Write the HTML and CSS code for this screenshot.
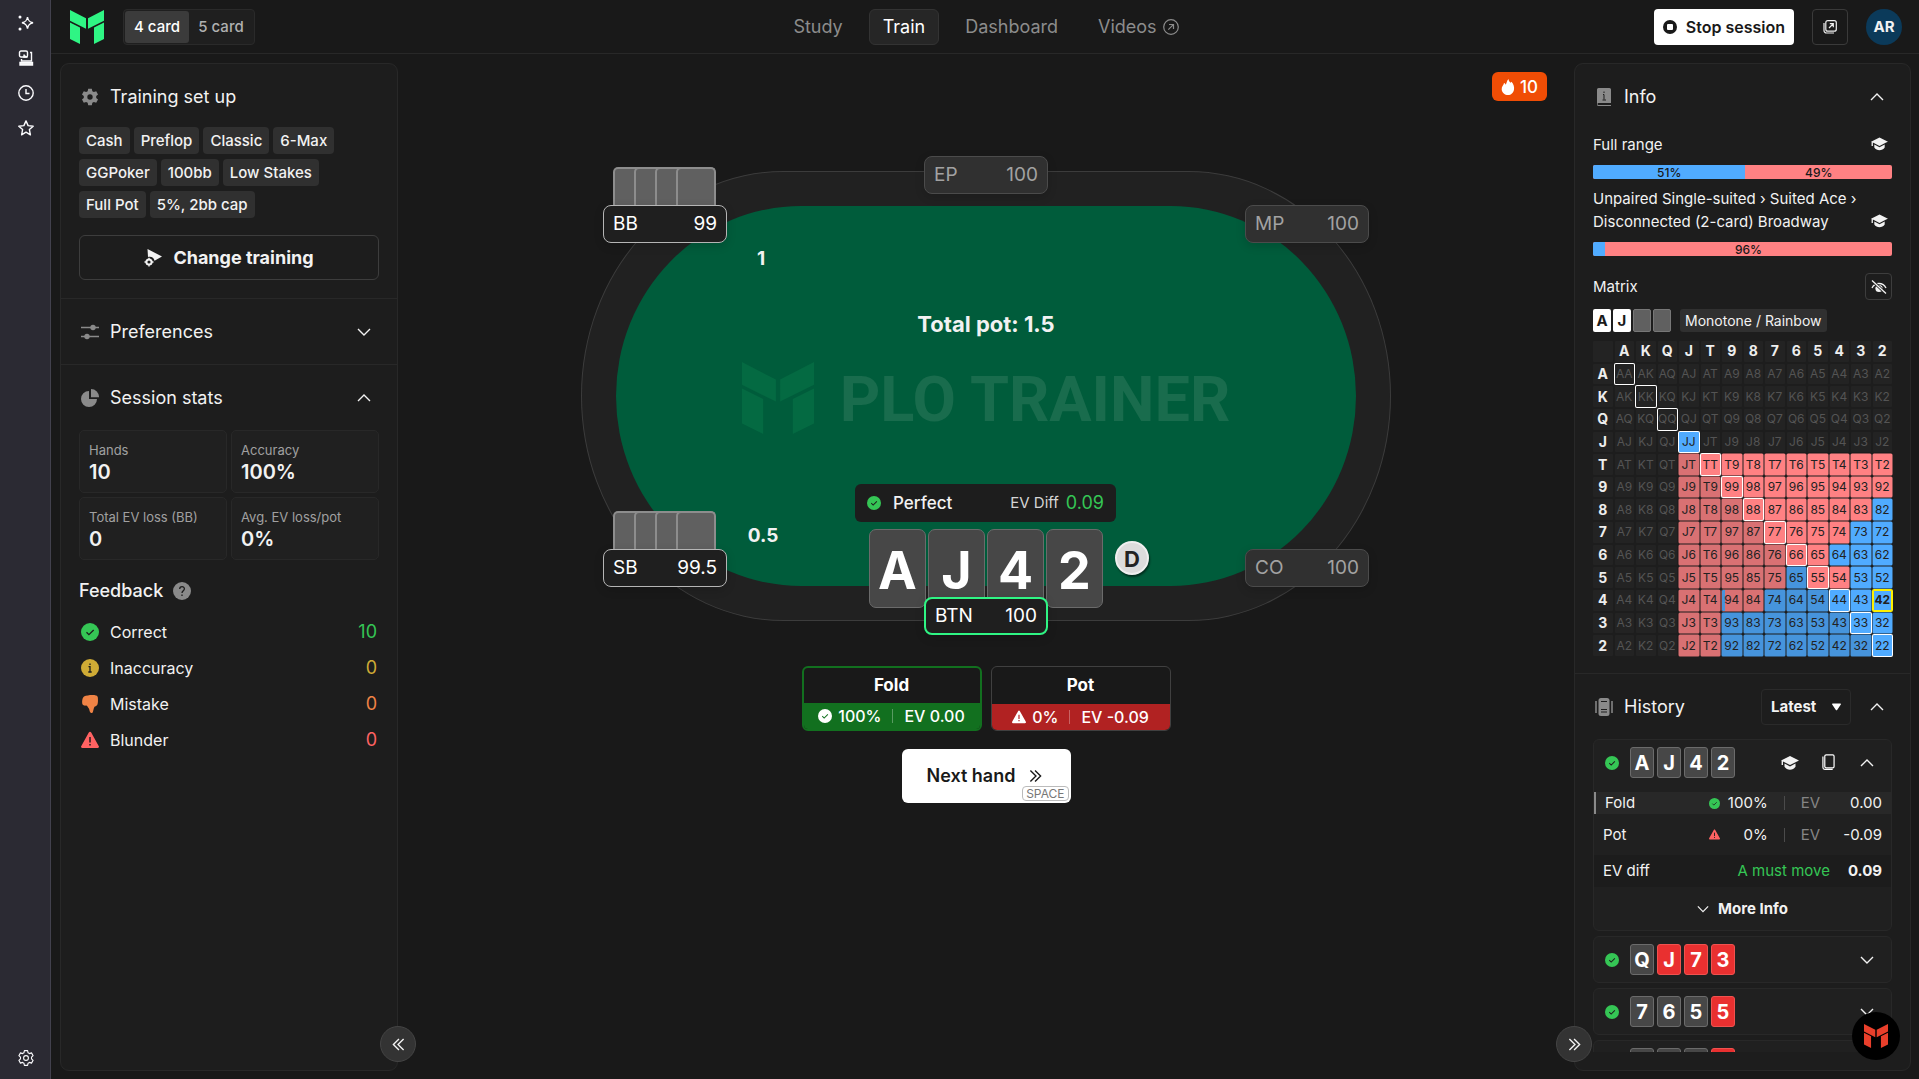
FILE: index.html
```
<!DOCTYPE html>
<html lang="en">
<head>
<meta charset="UTF-8">
<title>PLO Trainer</title>
<link rel="stylesheet" href="styles.css">
<script src="matrix.js" defer></script>
</head>
<body>

<!-- shared icons -->
<svg class="defs" aria-hidden="true">
	<symbol id="logo" viewBox="0 0 34 34"><path d="M0 0l16 8.3v10.4L0 10.7zM34 0L18 8.3v10.4l16-8zM0 12.5l10 5V34L0 29zM34 12.5l-10 5V34l10-5z"/></symbol>
	<symbol id="down" viewBox="0 0 14 14"><path d="M1 4l6 6 6-6" fill="none" stroke="currentColor" stroke-width="1.4"/></symbol>
	<symbol id="up" viewBox="0 0 14 14"><path d="M1 10l6-6 6 6" fill="none" stroke="currentColor" stroke-width="1.4"/></symbol>
	<symbol id="ok" viewBox="0 0 18 18"><circle cx="9" cy="9" r="9" fill="currentColor"/><path d="M5.5 9.2l2.4 2.4 4.8-4.6" fill="none" stroke="var(--mark, #1d1d1d)" stroke-width="1.3"/></symbol>
	<symbol id="warn" viewBox="0 0 18 18"><path d="M9 .8c.5 0 .9.3 1.200.7l7.600 13.700c.5.9-.1 1.800-1.100 1.800H1.300c-1 0-1.600-.9-1.100-1.800L7.800 1.500c.3-.4.7-.7 1.200-.7z" fill="currentColor"/><path d="M9 6v5.500M9 13v1.600" stroke="var(--mark, #1d1d1d)" stroke-width="1.5"/></symbol>
	<symbol id="cap" viewBox="0 0 18 14"><path d="M9 0l9 4.500-2 1L9 9 2 5.500v3.500H.6V4.800L0 4.500z" fill="currentColor"/><path d="M3.500 7.600L9 10.500l5.500-2.900v3.200C12 14.600 6 14.600 3.500 10.800z" fill="currentColor"/></symbol>
	<symbol id="next" viewBox="0 0 14 14"><path d="M1.500 1l6 6-6 6M6.500 1l6 6-6 6" fill="none" stroke="currentColor" stroke-width="1.500"/></symbol>
	<symbol id="prev" viewBox="0 0 14 14"><path d="M12.500 1l-6 6 6 6M7.500 1l-6 6 6 6" fill="none" stroke="currentColor" stroke-width="1.500"/></symbol>
	<symbol id="gear" viewBox="0 0 20 20"><path d="M8 .8h4l.6 2.700 1.700 1 2.600-.9 2 3.500-2 1.900v2l2 1.900-2 3.500-2.600-.9-1.700 1-.6 2.700H8l-.6-2.700-1.700-1-2.600.9-2-3.500 2-1.900V9l-2-1.900 2-3.500 2.600.9 1.700-1z" stroke-linejoin="round"/><circle cx="10" cy="10" r="3" class="hole"/></symbol>
</svg>

<div class="app">
	<aside class="rail">
		<button aria-label="Assistant"><svg viewBox="0 0 16 16"><path d="M9.500 2c.6 3.600 1.700 4.900 5.500 5.800-3.800.9-4.900 2.200-5.500 5.800C8.900 10 7.800 8.700 4 7.800 7.800 6.900 8.900 5.600 9.500 2z"/><circle cx="2" cy="2" r=".8"/><circle cx="2" cy="14" r=".8"/></svg></button>
		<button aria-label="Synced tabs"><svg viewBox="0 0 16 16"><rect x="1.500" y="1" width="8" height="6" rx="1.500"/><path d="M12 2.500h1.500V11h-10V9"/><path d="M2 12.500h12.500V15H2zM6 4.500V7h3.500" fill="currentColor"/></svg></button>
		<button aria-label="History"><svg viewBox="0 0 16 16"><circle cx="8" cy="8" r="7.200"/><path d="M8 4v4.500h3.500"/></svg></button>
		<button aria-label="Bookmarks"><svg viewBox="0 0 16 16"><path d="M8 .9l2.100 4.700 5.100.6-3.800 3.400 1 5.200L8 12.200l-4.400 2.600 1-5.200L.8 6.200l5.100-.6z" stroke-linejoin="round"/></svg></button>
		<button class="settings" aria-label="Settings"><svg><use href="#gear"/></svg></button>
	</aside>

	<div class="page">
		<header class="top">
			<div class="brand">
				<svg class="logo"><use href="#logo"/></svg>
				<div class="tabs"><button class="on">4 card</button><button>5 card</button></div>
			</div>
			<nav class="menu">
				<a href="#">Study</a>
				<a href="#" class="on">Train</a>
				<a href="#">Dashboard</a>
				<a href="#">Videos <svg viewBox="0 0 16 16"><circle cx="8" cy="8" r="7.300"/><path d="M5.300 10.700l5-5M6 5.500h4.500V10"/></svg></a>
			</nav>
			<div class="account">
				<button class="stop"><svg viewBox="0 0 14 14"><circle cx="7" cy="7" r="7" fill="#191919"/><rect x="4" y="4" width="6" height="6" rx="1" fill="#fff"/></svg>Stop session</button>
				<button class="popout" aria-label="Open in window"><svg viewBox="0 0 14 14"><rect x="2.800" y=".7" width="10.500" height="10.500" rx="2"/><path d="M1 3v7.500a2.500 2.500 0 0 0 2.500 2.500H11M6 8l4-4M6.800 3.700h3.500v3.500"/></svg></button>
				<div class="avatar">AR</div>
			</div>
		</header>

		<div class="columns">
			<aside class="panel left">
				<section>
					<h2><svg class="ico" fill="currentColor"><use href="#gear"/></svg>Training set up</h2>
					<ul class="chips">
						<li>Cash</li><li>Preflop</li><li>Classic</li><li>6-Max</li>
						<li>GGPoker</li><li>100bb</li><li>Low Stakes</li>
						<li>Full Pot</li><li>5%, 2bb cap</li>
					</ul>
					<button class="change"><svg viewBox="0 0 18 18" fill="currentColor"><path d="M3.500 0L18 7.500l-7.500 4.300C10 8.500 7 7 4 8z"/><circle cx="5" cy="13" r="2.600" fill="none" stroke="currentColor" stroke-width="2"/><path d="M4.300 8.700h1.400v2H4.300zM4.300 15.500h1.400v2H4.300zM.5 12.300h2v1.400h-2zM7.500 12.300h2v1.400h-2z"/></svg>Change training</button>
				</section>
				<section>
					<h2><svg class="ico" viewBox="0 0 18 18"><path d="M0 4.500h18M0 13.500h18" stroke="currentColor" stroke-width="1.300"/><circle cx="12" cy="4.500" r="2.700" fill="currentColor"/><circle cx="6" cy="13.500" r="2.700" fill="currentColor"/></svg>Preferences<button class="fold-btn" aria-label="Show preferences"><svg><use href="#down"/></svg></button></h2>
				</section>
				<section>
					<h2><svg class="ico" viewBox="0 0 18 18" fill="currentColor"><path d="M8 2v8h8a8 8 0 1 1-8-8z"/><path d="M10 0a8 8 0 0 1 8 8.300h-8z"/></svg>Session stats<button class="fold-btn" aria-label="Hide session stats"><svg><use href="#up"/></svg></button></h2>
					<dl class="stats">
						<div><dt>Hands</dt><dd>10</dd></div>
						<div><dt>Accuracy</dt><dd>100%</dd></div>
						<div><dt>Total EV loss (BB)</dt><dd>0</dd></div>
						<div><dt>Avg. EV loss/pot</dt><dd>0%</dd></div>
					</dl>
					<h3>Feedback <svg viewBox="0 0 18 18"><circle cx="9" cy="9" r="9" fill="#8a8a8a"/><path d="M6.700 7c0-3 4.700-3 4.700-.2C11.400 8.700 9 8.800 9 11M9 12.500V14" fill="none" stroke="#1d1d1d" stroke-width="1.300"/></svg></h3>
					<ul class="feedback">
						<li class="green"><svg><use href="#ok"/></svg><span>Correct</span><b>10</b></li>
						<li class="yellow"><svg viewBox="0 0 18 18"><circle cx="9" cy="9" r="9" fill="currentColor"/><path d="M9 4.500V6M7.500 7.700H9v5M7.300 13h3.400" fill="none" stroke="#1d1d1d" stroke-width="1.300"/></svg><span>Inaccuracy</span><b>0</b></li>
						<li class="orange"><svg viewBox="0 0 18 18" fill="currentColor"><path d="M3 1.500C6 .3 11-.3 15 .4c1.500.2 2 1.600 1.900 3.200.2 2.800 0 5.400-.9 6.700-.8.9-1.900 1-2.500 1.500-.9 1.500-1.100 3.800-1.600 5.200-.5 1.500-2.600 1.300-3-.2-.4-1.700-.7-3-1.600-4.100-.6-1.100-1.200-2-2.100-2.200C3.800 10.800 2.400 10.600 1.600 9.500.7 8 1 3 3 1.500z"/></svg><span>Mistake</span><b>0</b></li>
						<li class="red"><svg><use href="#warn"/></svg><span>Blunder</span><b>0</b></li>
					</ul>
				</section>
				<button class="collapse" aria-label="Collapse left panel"><svg><use href="#prev"/></svg></button>
			</aside>

			<main class="stage">
				<div class="streak"><svg viewBox="0 0 14 16"><path d="M7.500 0c.2 2 1 2.800 2.100 3.700l.9-1C12.500 5 13.500 7.500 13 10.500 12.500 14 10 16 7 16s-6-2-6.300-5.500C.5 7.500 2.500 6.500 3 4c1 .3 1.500 1 1.700 1.700C5.700 4.500 5.500 2 7.500 0z" fill="#fff"/></svg>10</div>
				<div class="table">
					<div class="felt"></div>
					<div class="pot">Total pot: 1.5</div>
					<div class="watermark"><svg><use href="#logo"/></svg><span>PLO TRAINER</span></div>

					<div class="backs bb"><i></i><i></i><i></i><i></i></div>
					<div class="seat live bb"><span>BB</span><span>99</span></div>
					<div class="bet bb">1</div>
					<div class="backs sb"><i></i><i></i><i></i><i></i></div>
					<div class="seat live sb"><span>SB</span><span>99.5</span></div>
					<div class="bet sb">0.5</div>
					<div class="seat ep"><span>EP</span><span>100</span></div>
					<div class="seat mp"><span>MP</span><span>100</span></div>
					<div class="seat co"><span>CO</span><span>100</span></div>

					<div class="verdict"><svg><use href="#ok"/></svg><span>Perfect</span><small>EV Diff</small><b>0.09</b></div>
					<div class="hand"><span>A</span><span>J</span><span>4</span><span>2</span></div>
					<div class="dealer">D</div>
					<div class="seat live hero"><span>BTN</span><span>100</span></div>
				</div>

				<div class="actions">
					<button class="action best">
						<strong>Fold</strong>
						<span><svg><use href="#ok"/></svg>100%<i></i>EV 0.00</span>
					</button>
					<button class="action bad">
						<strong>Pot</strong>
						<span><svg><use href="#warn"/></svg>0%<i></i>EV -0.09</span>
					</button>
				</div>
				<button class="next-hand">Next hand <svg><use href="#next"/></svg><kbd>SPACE</kbd></button>
			</main>

			<aside class="panel right">
				<section class="info">
					<h2><svg class="ico" viewBox="0 0 18 18"><path d="M3.500 0h11a1.500 1.500 0 0 1 1.500 1.500V15H3.500a1 1 0 0 0 0 2H16v1H3.500A1.500 1.500 0 0 1 2 16.500v-15A1.500 1.500 0 0 1 3.500 0z" fill="currentColor"/><path d="M9 3.500V5M8 6.500h1v5M7.500 12h3.500" fill="none" stroke="#1d1d1d"/></svg>Info<button class="fold-btn" aria-label="Hide info"><svg><use href="#up"/></svg></button></h2>
					<div class="range"><span>Full range</span><svg><use href="#cap"/></svg></div>
					<div class="bar"><span style="width:51%">51%</span><span>49%</span></div>
					<div class="range"><span>Unpaired Single-suited › Suited Ace › Disconnected (2-card) Broadway</span><svg><use href="#cap"/></svg></div>
					<div class="bar"><span style="width:4%"></span><span>96%</span></div>
					<div class="matrix-head">Matrix<button aria-label="Hide matrix"><svg viewBox="0 0 16 14"><path d="M1 8c3-6 11-6 14 0" fill="none" stroke="currentColor" stroke-width="1.300"/><circle cx="8" cy="8.500" r="3.600" fill="currentColor"/><path d="M1 .5l14 13" stroke="#1d1d1d" stroke-width="3"/><path d="M1 .5l14 13" stroke="currentColor" stroke-width="1.300"/></svg></button></div>
					<div class="picked"><b>A</b><b>J</b><i></i><i></i><span>Monotone / Rainbow</span></div>
					<table class="matrix" id="matrix"></table>
				</section>
				<section class="history">
					<h2><svg class="ico" viewBox="0 0 18 18"><rect x="3.500" width="11" height="18" rx="2.500" fill="currentColor"/><path d="M1 3v12M17 3v12" stroke="currentColor" stroke-width="1.500"/><path d="M6 3.500h6M6 11.500h6M6 14h6" stroke="#1d1d1d"/></svg>History
						<span class="sort"><select aria-label="Sort history"><option>Latest</option><option>Oldest</option></select><svg viewBox="0 0 10 8"><path d="M.8 0h8.400c.7 0 1 .7.600 1.200L5.700 7.300a.9.9 0 0 1-1.400 0L.2 1.200C-.2.7.1 0 .8 0z" fill="#fff"/></svg></span>
						<button class="fold-btn" aria-label="Hide history"><svg><use href="#up"/></svg></button>
					</h2>
					<div class="hands">
						<article class="open">
							<div class="line"><svg class="state"><use href="#ok"/></svg><span class="mini"><b>A</b><b>J</b><b>4</b><b>2</b></span>
								<svg class="study"><use href="#cap"/></svg>
								<svg class="copy" viewBox="0 0 14 18"><rect x="3" y=".7" width="10" height="14" rx="1.500"/><path d="M1 2.500v12a2 2 0 0 0 2 2h8.500"/></svg>
								<button aria-label="Close hand"><svg><use href="#up"/></svg></button>
							</div>
							<div class="move chosen"><span>Fold</span><svg class="green"><use href="#ok"/></svg><em>100%</em><i></i><small>EV</small><em class="ev">0.00</em></div>
							<div class="move"><span>Pot</span><svg class="red"><use href="#warn"/></svg><em>0%</em><i></i><small>EV</small><em class="ev">-0.09</em></div>
							<div class="diff"><span>EV diff</span><em>A must move</em><b>0.09</b></div>
							<button class="more"><svg><use href="#down"/></svg>More Info</button>
						</article>
						<article><div class="line"><svg class="state"><use href="#ok"/></svg><span class="mini"><b>Q</b><b class="h">J</b><b class="h">7</b><b class="h">3</b></span><button aria-label="Open hand"><svg><use href="#down"/></svg></button></div></article>
						<article><div class="line"><svg class="state"><use href="#ok"/></svg><span class="mini"><b>7</b><b>6</b><b>5</b><b class="h">5</b></span><button aria-label="Open hand"><svg><use href="#down"/></svg></button></div></article>
						<article><div class="line"><span class="mini last"><b></b><b></b><b></b><b class="h"></b></span></div></article>
					</div>
				</section>
				<button class="collapse" aria-label="Collapse right panel"><svg><use href="#next"/></svg></button>
			</aside>
		</div>
	</div>
	<button class="chat" aria-label="Open chat"><svg><use href="#logo"/></svg></button>
</div>
</body>
</html>
```
FILE: styles.css
```
* {
	box-sizing: border-box;
}

body {
	margin: 0;
	background: #191919;
	color: #f2f2f2;
	font: 15px/20px Inter, "Liberation Sans", sans-serif;
}

h2, h3, ul, dl, dd {
	margin: 0;
	padding: 0;
	list-style: none;
}

button, select {
	font: inherit;
	color: inherit;
	background: none;
	border: 0;
	padding: 0;
	cursor: pointer;
}

em, i {
	font-style: normal;
}

svg {
	display: block;
	flex: none;
}

.defs {
	position: absolute;
	width: 0;
	height: 0;
}

.app {
	display: flex;
	height: 100vh;
	overflow: hidden;
}

/* browser rail */
.rail {
	flex: none;
	width: 51px;
	display: flex;
	flex-direction: column;
	align-items: center;
	gap: 19px;
	padding: 15px 0 13px 2px;
	background: #2b2a33;
	border-right: 1px solid #42414d;
}

.rail svg {
	width: 16px;
	height: 16px;
	fill: none;
	stroke: #fbfbfe;
	stroke-width: 1.4;
}

.rail .settings {
	margin-top: auto;
}

.page {
	flex: 1;
	min-width: 0;
	display: flex;
	flex-direction: column;
}

/* header */
.top {
	flex: none;
	display: grid;
	grid-template-columns: 1fr auto 1fr;
	align-items: center;
	height: 54px;
	padding: 0 17px 0 19px;
	border-bottom: 1px solid #282828;
}

.brand {
	display: flex;
	align-items: center;
	gap: 19px;
}

.logo {
	width: 34px;
	height: 34px;
	fill: #2ff584;
}

.tabs {
	display: flex;
	padding: 1px;
	border: 1px solid #2a2a2a;
	border-radius: 4px;
	background: #1f1f1f;
	color: #b0b0b0;
	font-weight: 500;
}

.tabs button {
	height: 32px;
	width: 64px;
	border-radius: 3px;
}

.tabs .on {
	background: #3b3b3b;
	color: #fff;
}

.menu {
	display: flex;
	gap: 12px;
}

.menu a {
	display: flex;
	align-items: center;
	gap: 6px;
	height: 36px;
	padding: 0 13px;
	border: 1px solid transparent;
	border-radius: 6px;
	color: #8c8c8c;
	font-size: 18px;
	text-decoration: none;
}

.menu .on {
	background: #262626;
	border-color: #333;
	color: #fff;
}

.menu svg {
	width: 16px;
	height: 16px;
	fill: none;
	stroke: currentColor;
	stroke-width: 1.2;
}

.account {
	display: flex;
	justify-content: flex-end;
	gap: 18px;
}

.stop {
	display: flex;
	align-items: center;
	gap: 9px;
	height: 36px;
	padding: 0 9px;
	border-radius: 4px;
	background: #fff;
	color: #191919;
	font-size: 16px;
	font-weight: 600;
}

.stop svg {
	width: 14px;
	height: 14px;
}

.popout {
	display: grid;
	place-items: center;
	width: 36px;
	height: 36px;
	border: 1px solid #3a3a3a;
	border-radius: 4px;
}

.popout svg {
	width: 14px;
	height: 14px;
	fill: none;
	stroke: #eee;
	stroke-width: 1.2;
}

.avatar {
	width: 36px;
	border-radius: 50%;
	background: #0b3a5a;
	font-weight: 700;
	line-height: 36px;
	text-align: center;
}

/* side panels */
.columns {
	flex: 1;
	min-height: 0;
	display: flex;
	padding: 9px 8px 8px 9px;
}

.panel {
	position: relative;
	flex: none;
	width: 338px;
	display: flex;
	flex-direction: column;
	background: #1d1d1d;
	border: 1px solid #282828;
	border-radius: 9px;
}

.panel.right {
	width: 337px;
}

.panel section {
	padding: 0 18px;
}

.panel section + section {
	border-top: 1px solid #282828;
}

.panel h2 {
	display: flex;
	align-items: center;
	gap: 11px;
	height: 65px;
	font-size: 18px;
	font-weight: 400;
}

.ico {
	width: 18px;
	height: 18px;
	margin-left: 2px;
	color: #8a8a8a;
	stroke: none;
}

.hole {
	fill: #1d1d1d;
}

.rail .hole {
	fill: none;
}

.fold-btn {
	margin-left: auto;
	padding: 8px;
}

.fold-btn svg, .line button svg {
	width: 14px;
	height: 14px;
}

.chips {
	display: flex;
	flex-wrap: wrap;
	gap: 5px 4px;
	margin: -2px 0 17px;
}

.chips li {
	height: 27px;
	padding: 0 7px;
	border-radius: 4px;
	background: #303030;
	line-height: 27px;
	font-weight: 500;
}

.change {
	display: flex;
	align-items: center;
	justify-content: center;
	gap: 11px;
	width: 100%;
	height: 45px;
	margin-bottom: 18px;
	border: 1px solid #3d3d3d;
	border-radius: 6px;
	font-size: 18px;
	font-weight: 700;
}

.change svg {
	width: 18px;
	height: 18px;
}

.stats {
	display: grid;
	grid-template-columns: 1fr 1fr;
	gap: 4px;
}

.stats div {
	height: 63px;
	padding: 10px 9px;
	border: 1px solid #282828;
	border-radius: 5px;
	background: #202020;
}

.stats dt {
	color: #a0a0a0;
	font-size: 13px;
	line-height: 18px;
	white-space: nowrap;
}

.stats dd {
	font-size: 20px;
	font-weight: 600;
	line-height: 26px;
}

.panel h3 {
	display: flex;
	align-items: center;
	gap: 10px;
	height: 46px;
	margin-top: 8px;
	font-size: 18px;
	font-weight: 500;
}

.panel h3 svg, .feedback svg {
	width: 18px;
	height: 18px;
}

.feedback li {
	display: flex;
	align-items: center;
	gap: 11px;
	height: 36px;
	padding: 0 2px;
}

.feedback span {
	flex: 1;
	color: #f2f2f2;
	font-size: 16px;
}

.feedback b {
	font-size: 18px;
	font-weight: 400;
}

.green { color: #35c655; }
.yellow { color: #cfab35; }
.orange { color: #f08345; }
.red { color: #ff6262; }

.collapse {
	position: absolute;
	bottom: 8px;
	display: grid;
	place-items: center;
	width: 36px;
	height: 36px;
	border: 1px solid #444;
	border-radius: 50%;
	background: #333;
}

.left .collapse { right: -19px; }
.right .collapse { left: -19px; }

.collapse svg {
	width: 13px;
	height: 13px;
}

/* table */
.stage {
	position: relative;
	flex: 1;
	min-width: 0;
	display: flex;
	flex-direction: column;
	align-items: center;
	padding: 108px 16px 0;
}

.streak {
	position: absolute;
	top: 9px;
	right: 27px;
	display: flex;
	align-items: center;
	gap: 5px;
	height: 29px;
	padding: 0 9px;
	border-radius: 6px;
	background: #f04d05;
	color: #fff;
	font-size: 17px;
	font-weight: 500;
}

.streak svg {
	width: 14px;
	height: 16px;
}

.table {
	position: relative;
	flex: none;
	width: 100%;
	max-width: 810px;
	height: 450px;
	border: 1px solid #3c3c3c;
	border-radius: 25% / 50%;
	background: #212121;
}

.felt {
	position: absolute;
	inset: 34px;
	border-radius: 25% / 50%;
	background: #005c3b;
}

.pot {
	position: absolute;
	top: 138px;
	width: 100%;
	font-size: 22px;
	font-weight: 700;
	line-height: 28px;
	text-align: center;
}

.watermark {
	position: absolute;
	top: 188px;
	width: 100%;
	display: flex;
	align-items: center;
	justify-content: center;
	gap: 26px;
	color: #196c4d;
	font: 700 63px/72px Roboto, "Liberation Sans", sans-serif;
}

.watermark svg {
	width: 72px;
	height: 72px;
	fill: #046a42;
}

.watermark span {
	padding-top: 4px;
}

.seat {
	position: absolute;
	display: flex;
	align-items: center;
	justify-content: space-between;
	width: 124px;
	height: 38px;
	padding: 0 9px;
	border: 1px solid #4b4b4b;
	border-radius: 8px;
	background: #303030;
	color: #a2a2a2;
	font-size: 19px;
	box-shadow: 0 3px 10px rgba(0, 0, 0, .15);
}

.seat.live {
	border-color: #b5b5b5;
	background: #1f1f1f;
	color: #fff;
}

.seat.hero {
	border: 2px solid #2ff584;
	top: 425px;
	left: calc(50% - 62px);
}

.seat.bb { top: 33px; left: 21px; }
.seat.sb { top: 377px; left: 21px; }
.seat.mp { top: 33px; right: 21px; }
.seat.co { top: 377px; right: 21px; }
.seat.ep { top: -16px; left: calc(50% - 62px); }

.backs {
	position: absolute;
	display: flex;
}

.backs.bb { top: -5px; left: 31px; }
.backs.sb { top: 339px; left: 31px; }

.backs i {
	width: 38px;
	height: 44px;
	margin-right: -17px;
	border: 1px solid #8d8d8d;
	border-width: 2px 1px 0 2px;
	border-radius: 5px 5px 0 0;
	background: #606060;
}

.backs i:last-child {
	width: 40px;
	margin-right: 0;
	border-right-width: 2px;
}

.bet {
	position: absolute;
	width: 60px;
	font-size: 19px;
	font-weight: 700;
	line-height: 24px;
	text-align: center;
}

.bet.bb { top: 75px; left: 149px; }
.bet.sb { top: 352px; left: 151px; }

.verdict {
	position: absolute;
	top: 312px;
	left: calc(50% - 131px);
	display: flex;
	align-items: center;
	width: 261px;
	height: 38px;
	padding: 0 12px;
	border-radius: 6px;
	background: #1d1d1d;
	font-size: 17px;
}

.verdict svg {
	width: 14px;
	height: 14px;
	margin-right: 12px;
	color: #35c655;
}

.verdict span { font-weight: 500; }

.verdict small {
	margin-left: auto;
	margin-right: 7px;
	font-size: 15px;
	color: #d5d5d5;
}

.verdict b {
	color: #35c655;
	font-size: 18px;
	font-weight: 400;
}

.hand {
	position: absolute;
	top: 357px;
	left: calc(50% - 117px);
	display: flex;
	gap: 2px;
}

.hand span {
	width: 57px;
	height: 79px;
	border: 1px solid #6b6b6b;
	border-radius: 7px;
	background: #474747;
	color: #fff;
	font-size: 52px;
	font-weight: 700;
	line-height: 82px;
	text-align: center;
}

.dealer {
	position: absolute;
	top: 369px;
	left: calc(50% + 129px);
	width: 34px;
	height: 34px;
	border: 2px solid #efefef;
	border-radius: 50%;
	background: #dcdcdc;
	color: #222;
	font-size: 22px;
	font-weight: 700;
	line-height: 32px;
	text-align: center;
	box-shadow: 1px 2px 2px rgba(0, 0, 0, .5);
}

.actions {
	display: flex;
	gap: 9px;
	margin-top: 45px;
}

.action {
	display: flex;
	flex-direction: column;
	width: 180px;
	height: 65px;
	overflow: hidden;
	border: 1px solid #404040;
	border-radius: 6px;
	color: #fff;
}

.action strong {
	flex: 1;
	width: 100%;
	font-size: 17px;
	font-weight: 700;
	line-height: 35px;
}

.action span {
	display: flex;
	align-items: center;
	justify-content: center;
	width: 100%;
	height: 31px;
	font-size: 16px;
	font-weight: 500;
}

.action svg {
	width: 14px;
	height: 14px;
	margin-right: 6px;
}

.action i {
	width: 1px;
	height: 14px;
	margin: 0 11px;
	background: rgba(255, 255, 255, .3);
}

.best {
	--mark: #12701f;
	border: 2px solid #12701f;
}

.bad { --mark: #b12222; }
.best span { background: #12701f; }
.bad span { background: #b12222; }
.bad strong { line-height: 37px; }

.next-hand {
	position: relative;
	display: flex;
	align-items: center;
	gap: 14px;
	width: 169px;
	height: 54px;
	margin-top: 18px;
	padding-left: 25px;
	border-radius: 6px;
	background: #fff;
	color: #191919;
	font-size: 18px;
	font-weight: 600;
	white-space: nowrap;
}

.next-hand svg {
	width: 13px;
	height: 14px;
}

.next-hand kbd {
	position: absolute;
	right: 2px;
	bottom: 2px;
	padding: 0 3px;
	border: 1px solid #bbb;
	border-radius: 4px;
	background: #fff;
	color: #777;
	font: 12px/13px Inter, "Liberation Sans", sans-serif;
}

/* info panel */
.range {
	display: flex;
	align-items: flex-end;
	justify-content: space-between;
	padding-right: 4px;
	font-size: 15px;
	line-height: 23px;
}

.range svg {
	width: 17px;
	height: 14px;
	margin-bottom: 5px;
}

.range span {
	max-width: 272px;
}

.info h2 {
	margin-bottom: 4px;
}

.bar {
	display: flex;
	height: 14px;
	margin: 9px 0 8px;
	overflow: hidden;
	border-radius: 2px;
	background: #ff8183;
	color: #191919;
	font-size: 12px;
	font-weight: 500;
	line-height: 15px;
	text-align: center;
}

.bar span:first-child { background: #50abff; }
.bar span:last-child { flex: 1; }

.matrix-head {
	display: flex;
	align-items: center;
	justify-content: space-between;
	margin-top: 17px;
	font-size: 15px;
}

.matrix-head button {
	display: grid;
	place-items: center;
	width: 27px;
	height: 27px;
	border: 1px solid #3d3d3d;
	border-radius: 4px;
}

.matrix-head svg {
	width: 16px;
	height: 14px;
}

.picked {
	display: flex;
	gap: 2px;
	margin: 9px 0 7px;
	line-height: 23px;
}

.picked b, .picked i {
	width: 18px;
	height: 23px;
	border-radius: 2px;
	background: #fff;
	color: #191919;
	text-align: center;
}

.picked i {
	border: 1px solid #777;
	background: #606060;
}

.picked span {
	margin-left: 7px;
	padding: 0 5px;
	border-radius: 3px;
	background: #303030;
	font-size: 14px;
}

.matrix {
	width: 303px;
	height: 319px;
	margin: 0 -2px 15px;
	border-spacing: 2px;
	table-layout: fixed;
}

.matrix th, .matrix td {
	padding: 0;
	border-radius: 1px;
	background: #232323;
	color: #eee;
	font-size: 14px;
	line-height: 18px;
	text-align: center;
}

.matrix td {
	color: #545454;
	font-size: 12px;
}

.matrix .raise { background: #ff8183; color: #222; box-shadow: 0 0 0 .5px #ff8183; }
.matrix .play { background: #50abff; color: #222; box-shadow: 0 0 0 .5px #50abff; }
.matrix .raise.low { background: #d97173; box-shadow: 0 0 0 .5px #d97173; }
.matrix .play.low { background: #4694dc; box-shadow: 0 0 0 .5px #4694dc; }
.matrix .raise.mix { background: linear-gradient(to right, #4694dc 3px, #d97173 3px); }

.matrix .pair, .matrix .current {
	position: relative;
	z-index: 1;
	box-shadow: 0 0 0 1px #fff;
}

.matrix .current {
	box-shadow: inset 0 0 0 1px #fff000, 0 0 0 1px #fff000;
	font-weight: 700;
}

/* history */
.panel .history {
	flex: 1;
	min-height: 0;
	display: flex;
	flex-direction: column;
	padding-bottom: 18px;
}

.history h2 {
	flex: none;
}

.sort {
	position: relative;
	margin-left: auto;
}

.sort select {
	display: block;
	width: 90px;
	height: 36px;
	padding: 0 9px;
	border: 1px solid #2a2a2a;
	border-radius: 4px;
	appearance: none;
	font-size: 15px;
	font-weight: 700;
}

.sort option {
	background: #1d1d1d;
}

.sort svg {
	position: absolute;
	top: 14px;
	right: 10px;
	width: 9px;
	height: 8px;
	pointer-events: none;
}

.sort + .fold-btn {
	margin-left: 0;
}

.hands {
	flex: 1;
	min-height: 0;
	overflow: hidden;
}

.hands article {
	margin-bottom: 5px;
	border: 1px solid #282828;
	border-radius: 6px;
	background: #202020;
}

.line {
	display: flex;
	align-items: center;
	height: 45px;
	padding: 0 17px 0 11px;
}

.open .line {
	margin-bottom: 7px;
}

.line .state {
	width: 14px;
	height: 14px;
	margin-right: 11px;
	color: #35c655;
}

.line button {
	margin-left: auto;
}

.mini {
	display: flex;
	gap: 3px;
}

.mini b {
	width: 24px;
	height: 31px;
	border: 1px solid #6b6b6b;
	border-radius: 3px;
	background: #474747;
	color: #fff;
	font-size: 20px;
	line-height: 31px;
	text-align: center;
}

.mini .h {
	border-color: #f0524f;
	background: #e93030;
}

.last {
	margin-left: 25px;
}

.study {
	width: 18px;
	height: 16px;
	margin-left: auto;
	margin-right: 23px;
}

.copy {
	width: 13px;
	height: 17px;
	margin-right: 25px;
	fill: none;
	stroke: #fff;
	stroke-width: 1.3;
}

.open .line button {
	margin-left: 0;
}

.move {
	display: flex;
	align-items: center;
	height: 41px;
	padding: 0 9px;
}

.move.chosen {
	height: 22px;
	border-left: 2px solid #8a8a8a;
	background: #282828;
}

.move span {
	margin-right: auto;
}

.move svg {
	width: 11px;
	height: 11px;
}

.move em {
	width: 48px;
	text-align: right;
}

.move i {
	width: 1px;
	height: 14px;
	margin: 0 16px;
	background: #4b4b4b;
}

.move small {
	color: #858585;
	font-size: 15px;
}

.move .ev {
	width: 62px;
}

.diff {
	display: flex;
	align-items: center;
	gap: 18px;
	height: 32px;
	padding: 0 9px;
	background: #1c1c1c;
}

.diff em {
	margin-left: auto;
	color: #35c655;
}

.more {
	display: flex;
	align-items: center;
	justify-content: center;
	gap: 9px;
	width: 100%;
	height: 43px;
	font-weight: 700;
}

.more svg {
	width: 12px;
	height: 12px;
}

.chat {
	position: fixed;
	right: 19px;
	bottom: 19px;
	display: grid;
	place-items: center;
	width: 48px;
	height: 48px;
	border-radius: 50%;
	background: #000;
}

.chat svg {
	width: 24px;
	height: 24px;
	fill: #e93f2b;
}
```
FILE: matrix.js
```
var RANKS = "AKQJT98765432";

// first blue column for each row, from T down to 2
var PLAY_FROM = {T: 13, 9: 13, 8: 12, 7: 11, 6: 10, 5: 11, 4: 7, 3: 5, 2: 5};

function cell_class(r, c){
	if(r == 3 && c == 3) return "play";
	if(r < 4 || c < 3) return "";
	var row = RANKS.charAt(r), col = RANKS.charAt(c);
	var play = c >= PLAY_FROM[row] || (row == "5" && col == "6");
	var name = play ? "play" : "raise";
	if(c < r) name += " low";
	if(row == "4" && col == "9") name += " mix";
	if(row == "4" && col == "2") name += " current";
	return name;
}

function draw_matrix(table){
	var head = table.insertRow();
	head.appendChild(document.createElement("th"));
	for(var i = 0; i < RANKS.length; i++){
		var th = document.createElement("th");
		th.textContent = RANKS.charAt(i);
		head.appendChild(th);
	}

	for(var r = 0; r < RANKS.length; r++){
		var row = table.insertRow();
		var th = document.createElement("th");
		th.textContent = RANKS.charAt(r);
		row.appendChild(th);
		for(var c = 0; c < RANKS.length; c++){
			var td = row.insertCell();
			td.textContent = RANKS.charAt(Math.min(r, c)) + RANKS.charAt(Math.max(r, c));
			td.className = cell_class(r, c) + (r == c ? " pair" : "");
		}
	}
}

draw_matrix(document.getElementById("matrix"));
```
